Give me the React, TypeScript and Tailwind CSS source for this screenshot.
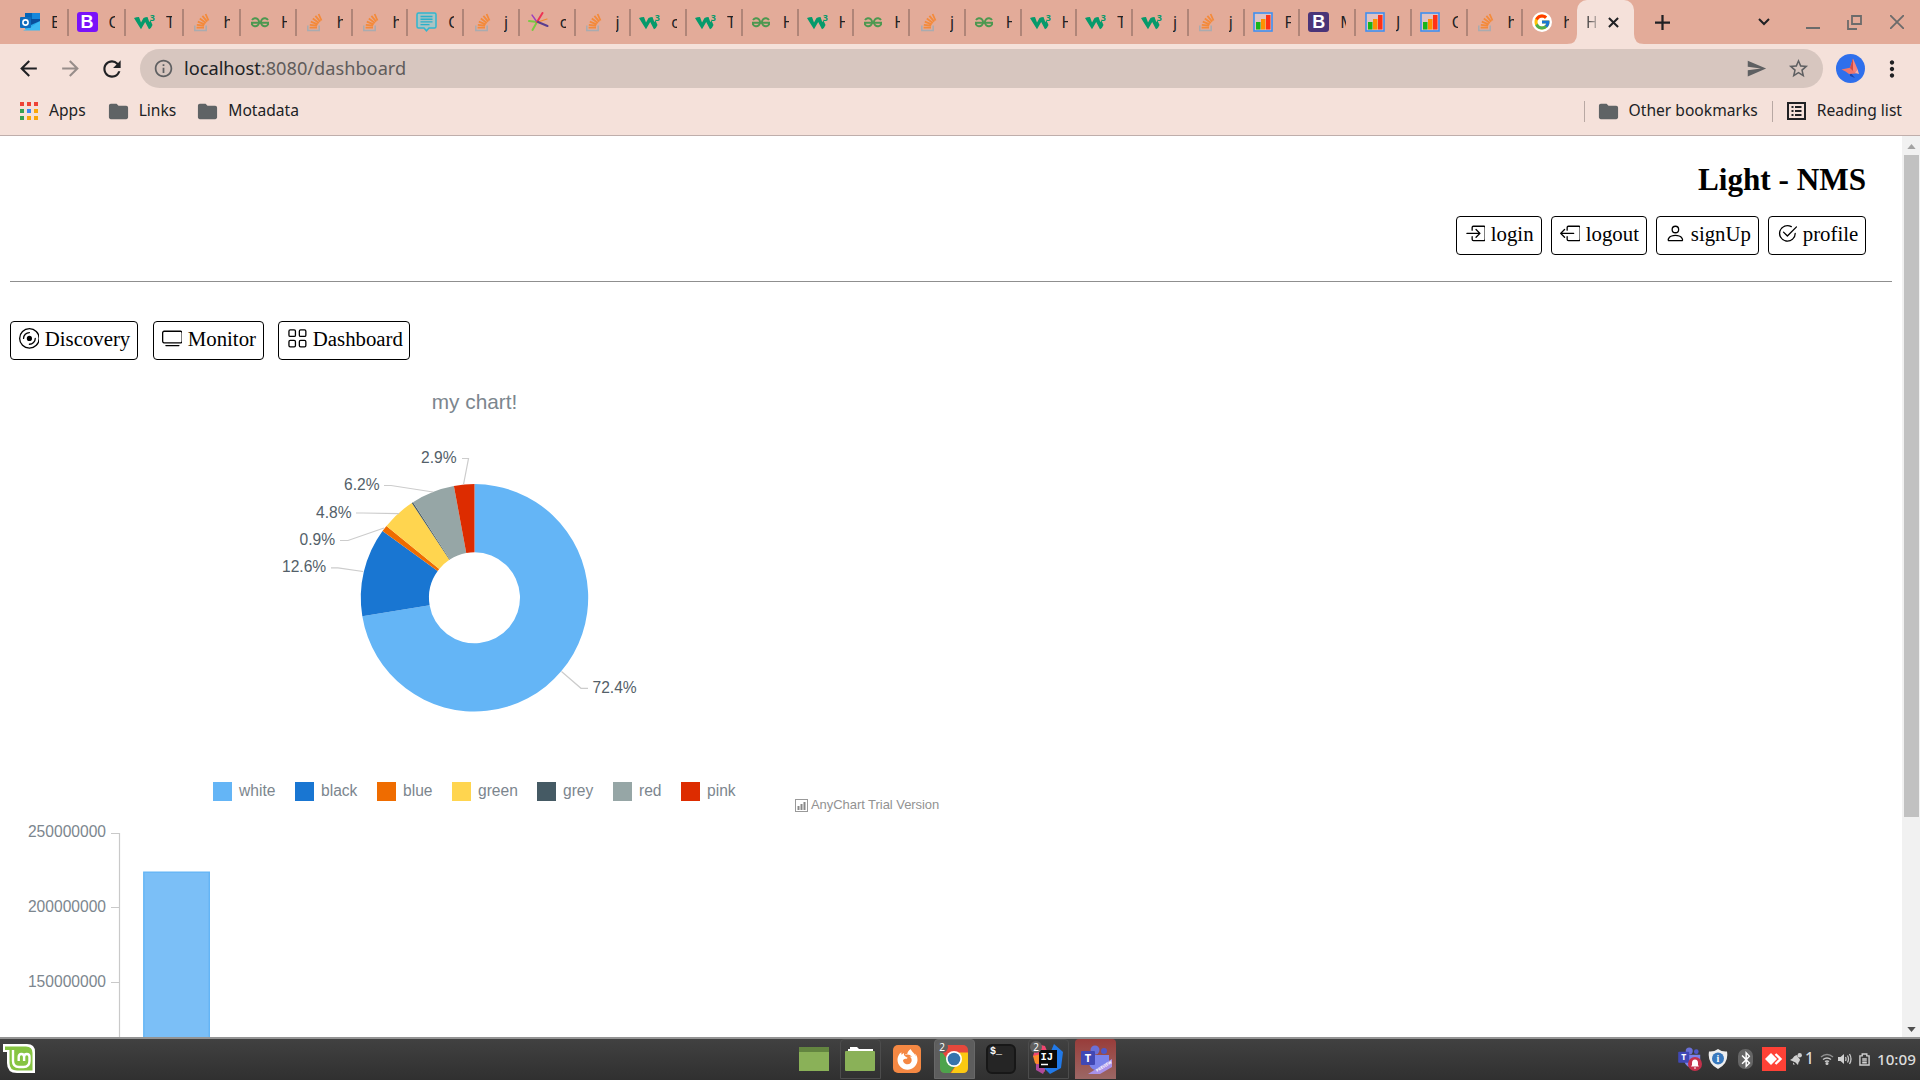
import React from "react";
import { BsBoxArrowInRight, BsBoxArrowLeft, BsPerson, BsCheck2Circle, BsDisc, BsTv, BsGrid } from "react-icons/bs";
import { MdArrowBack, MdArrowForward, MdRefresh, MdInfoOutline, MdSend, MdStarBorder, MdMoreVert, MdFolder } from "react-icons/md";
import { FaFirefoxBrowser, FaBluetoothB } from "react-icons/fa";
import { FcGoogle } from "react-icons/fc";

function Outlook() {
  return (
    <svg viewBox="0 0 20 20" className="h-5 w-5">
      <rect x="5" y="1" width="15" height="16" fill="#28a8ea" />
      <rect x="5" y="1" width="7.5" height="8" fill="#0364b8" />
      <rect x="12.5" y="1" width="7.5" height="8" fill="#1687dc" />
      <path d="M3 18.5h17V9l-9 6z" fill="#3cb9f2" />
      <path d="M11 13l9-4V7h-9z" fill="#0a4f9c" />
      <rect x="0" y="5" width="11" height="11" rx="1" fill="#0f6cbd" />
      <circle cx="5.5" cy="10.5" r="2.6" fill="none" stroke="#fff" strokeWidth="1.6" />
    </svg>
  );
}
function Bootstrap({ dark = false }: { dark?: boolean }) {
  return (
    <span className={(dark ? "bg-[#4a3478]" : "bg-[#7a12f9]") + " flex h-5 w-[21px] items-center justify-center rounded-[3px] font-['Liberation_Sans'] text-[18px] leading-none font-bold text-white"}>B</span>
  );
}
function W3() {
  return (
    <svg viewBox="0 0 21 20" className="h-5 w-[21px]">
      <path d="M0 6q2.500-1 5-1l2 5.500L9.500 6q2-1 4-1l1.800 5 1.200-1.500L18.500 13q-1 3-3.500 4.300L11.200 10 7 17.300Q3 11 0 6z" fill="#059a6b" />
      <text x="15.8" y="8.5" fontSize="9" fontWeight="bold" fontFamily="Noto Sans" fill="#059a6b">3</text>
    </svg>
  );
}
function StackO() {
  return (
    <svg viewBox="0 0 20 20" className="h-5 w-5" fill="none">
      <path d="M2.800 13.500v5h11.400v-5" stroke="#a9abb0" strokeWidth="1.5" />
      <path d="M4.600 15.600h7.400M4.800 12.800l7.300.9M5.800 9.700l7 2.600M7.800 6.600l6.100 4.300M10.400 3.900l4.800 5.700M13.600 2l2.900 6.500" stroke="#f48a3a" strokeWidth="1.8" />
    </svg>
  );
}
function Gfg() {
  return (
    <svg viewBox="0 0 20 20" className="h-5 w-5" fill="none" stroke="#4c9850" strokeWidth="1.9">
      <path d="M2 8A3.900 4 0 1 1 2 12.500" />
      <path d="M18 8A3.900 4 0 1 0 18 12.500" />
      <path d="M1 10.700h18M2 10.500v2.500M18 10.500v2.500" />
    </svg>
  );
}
function Chat() {
  return (
    <svg viewBox="0 0 21 20" className="h-5 w-[21px]">
      <path d="M2.500 1h16q1.500 0 1.500 1.500v12q0 1.500-1.500 1.500H13l-2.500 2.800L8 16H2.500q-1.500 0-1.500-1.500v-12Q1 1 2.500 1z" fill="#a9c3c3" stroke="#2fb7cf" strokeWidth="1.5" />
      <path d="M4.500 4.500h12M4.500 7.200h12M4.500 9.900h12M4.500 12.600h9" stroke="#2bb0ca" strokeWidth="1.4" />
    </svg>
  );
}
function Burst() {
  return (
    <svg viewBox="0 0 21 20" className="h-5 w-[21px]" strokeWidth="2" strokeLinecap="round" fill="none">
      <path d="M9 10 1 9" stroke="#7ac943" />
      <path d="M9 10 4 3" stroke="#9a3ec0" strokeWidth="1.3" />
      <path d="M9 10 4.500 18" stroke="#7ac943" />
      <path d="M9 10 14.500 1" stroke="#ee3355" />
      <path d="M10 10 19 7" stroke="#f08a2c" strokeWidth="1.2" />
      <path d="M10 10 19.500 14" stroke="#5a3d8f" />
    </svg>
  );
}
function ChartFav() {
  return (
    <svg viewBox="0 0 20 20" className="h-5 w-5">
      <rect x="1" y="1" width="18" height="18" fill="#dfc3c4" stroke="#3f8ff0" strokeWidth="1.6" />
      <rect x="3" y="10" width="4.5" height="7.5" fill="#19b519" />
      <rect x="8" y="7" width="4.5" height="10.5" fill="#ff9000" />
      <rect x="13" y="3" width="4.5" height="14.5" fill="#ff3116" />
    </svg>
  );
}
function GoogleFav() {
  return <span className="flex h-5 w-5 items-center justify-center rounded-full bg-white"><FcGoogle className="h-[18px] w-[18px]" /></span>;
}

const tabs: [React.ComponentType<any>, string][] = [
  [Outlook, "E"], [Bootstrap, "C"], [W3, "T"], [StackO, "h"], [Gfg, "H"], [StackO, "h"], [StackO, "h"], [Chat, "C"],
  [StackO, "j"], [Burst, "c"], [StackO, "j"], [W3, "c"], [W3, "T"], [Gfg, "H"], [W3, "H"], [Gfg, "H"], [StackO, "j"],
  [Gfg, "H"], [W3, "H"], [W3, "T"], [W3, "j"], [StackO, "j"], [ChartFav, "F"], [Bootstrap, "M"], [ChartFav, "J"],
  [ChartFav, "C"], [StackO, "h"], [GoogleFav, "h"],
];

function TabStrip() {
  return (
    <div className="flex h-[44px] shrink-0 bg-[#e3ab99] pl-[9px] text-[#202124]">
      {tabs.map(([Icon, t], i) => (
        <div key={i} className={(i < 4 ? "w-[57.5px]" : "w-[55.75px]") + " flex h-full shrink-0 items-center"}>
          <span className={(i ? "bg-[#b08578]" : "") + " h-[27px] w-[2px] shrink-0"} />
          <span className="ml-[8px] flex w-[21px] shrink-0 justify-center"><Icon dark={i > 10} /></span>
          <span className="ml-[11px] w-[6px] shrink-0 overflow-hidden text-[15.6px] leading-5">{t}</span>
        </div>
      ))}
      <div className="relative flex h-full w-[57px] shrink-0 items-center rounded-t-[10px] bg-[#f5e1da]">
        <svg viewBox="0 0 10 10" className="absolute bottom-0 -left-[10px] h-[10px] w-[10px]"><path d="M10 0v10H0Q10 10 10 0" fill="#f5e1da" /></svg>
        <svg viewBox="0 0 10 10" className="absolute -right-[10px] bottom-0 h-[10px] w-[10px]"><path d="M0 0v10h10Q0 10 0 0" fill="#f5e1da" /></svg>
        <span className="ml-[9px] w-[10px] overflow-hidden bg-linear-to-r from-[#333] to-[#b5a8a4] bg-clip-text text-[15.6px] leading-5 text-transparent">H</span>
        <svg viewBox="0 0 12 12" className="ml-[12px] h-[11px] w-[11px]"><path d="M1 1l10 10M11 1 1 11" stroke="#202124" strokeWidth="2.2" /></svg>
      </div>
      <div className="flex flex-1 items-center">
        <svg viewBox="0 0 16 16" className="ml-[21px] h-[15px] w-[15px]"><path d="M8 0v16M0 8h16" stroke="#202124" strokeWidth="2.4" /></svg>
        <svg viewBox="0 0 12 8" className="ml-[88px] h-[8px] w-[12px]" fill="none"><path d="M1 1l5 5 5-5" stroke="#202124" strokeWidth="2" /></svg>
        <span className="mt-[12px] ml-[36px] h-[2px] w-[14px] bg-[#6b6b6b]" />
        <svg viewBox="0 0 15 15" className="ml-[27px] h-[15px] w-[15px]" fill="none" stroke="#6b6b6b" strokeWidth="1.8"><path d="M5 1h9v8H5zM1 5v9h9" /></svg>
        <svg viewBox="0 0 14 14" className="ml-[28px] h-[14px] w-[14px]"><path d="M0 0l14 14M14 0 0 14" stroke="#6b6b6b" strokeWidth="1.8" /></svg>
      </div>
    </div>
  );
}

function Toolbar() {
  return (
    <div className="flex h-[49px] shrink-0 items-center">
      <MdArrowBack className="ml-[16px] h-[25px] w-[25px] text-[#202124]" />
      <MdArrowForward className="ml-[17px] h-[25px] w-[25px] text-[#978d8a]" />
      <MdRefresh className="ml-[16px] h-[26px] w-[26px] text-[#202124]" />
      <div className="ml-[15px] flex h-[39px] w-[1683px] items-center rounded-full bg-[#d7c6bf]">
        <MdInfoOutline className="ml-[13px] h-[21px] w-[21px] text-[#5f6062]" />
        <span className="mb-[2px] ml-[10px] text-[18.2px] leading-6 text-[#202124]">localhost<span className="text-[#605c5b]">:8080/dashboard</span></span>
        <MdSend className="mr-[20px] ml-auto h-[21px] w-[21px] text-[#5f6062]" />
        <MdStarBorder className="mr-[13px] h-[23px] w-[23px] text-[#5f6062]" />
      </div>
      <svg viewBox="0 0 29 29" className="ml-[13px] h-[29px] w-[29px]">
        <circle cx="14.5" cy="14.5" r="14.5" fill="#2e6fec" />
        <path d="M14 18l5 6-5-2z" fill="#1c46b0" />
        <path d="M17 4.500 21.500 15 19 19 14 14z" fill="#fb8478" />
        <path d="M5.500 15.500 15 13.500l5 6-7 .5q-3-3-7.500-4.500z" fill="#f0766c" />
        <path d="M17 4.500 14 14l3 3z" fill="#cf4c48" />
        <path d="M21.500 15l1.500 5-4-1z" fill="#ffb0a0" />
      </svg>
      <MdMoreVert className="ml-[14px] h-[26px] w-[26px] text-[#202124]" />
    </div>
  );
}

const appDots = ["#ee4237", "#ee4237", "#ee4237", "#35a052", "#3a86f5", "#f9a60c", "#35a052", "#f9a60c", "#f9a60c"];
function Bookmarks() {
  return (
    <div className="flex h-[43px] shrink-0 items-center border-b border-[#bfaeab] pb-[6px] text-[15.6px] text-[#202124]">
      <div className="ml-[20px] grid grid-cols-3 gap-[3px]">
        {appDots.map((c, i) => <span key={i} className="h-[4px] w-[4px]" style={{ background: c }} />)}
      </div>
      <span className="ml-[11px]">Apps</span>
      <MdFolder className="ml-[21px] h-[23px] w-[23px] text-[#5f6365]" />
      <span className="ml-[9px]">Links</span>
      <MdFolder className="ml-[20px] h-[23px] w-[23px] text-[#5f6365]" />
      <span className="ml-[9px]">Motadata</span>
      <span className="mr-[12px] ml-auto h-[21px] w-px bg-[#b8a8a3]" />
      <MdFolder className="h-[23px] w-[23px] text-[#5f6365]" />
      <span className="ml-[9px]">Other bookmarks</span>
      <span className="mr-[14px] ml-[14px] h-[21px] w-px bg-[#b8a8a3]" />
      <svg viewBox="0 0 19 18" className="h-[18px] w-[19px]" fill="none" stroke="#202124" strokeWidth="2"><path d="M1 1h17v16H1zM4.500 5h2M8 5h6.500M4.500 9h2M8 9h6.500M4.500 13h2M8 13h6.500" /></svg>
      <span className="mr-[18px] ml-[11px]">Reading list</span>
    </div>
  );
}

function NavButton({ icon: Icon, label, className }: { icon: React.ComponentType<any>; label: string; className: string }) {
  return (
    <button className={className + " flex h-[39px] shrink-0 items-center rounded-[4px] border border-black pb-[2px] pl-[7.5px] text-[20.8px] leading-none whitespace-nowrap"}>
      <Icon className="mb-[2px] h-[20.8px] w-[20.8px] shrink-0" /><span className="ml-[5.5px]">{label}</span>
    </button>
  );
}

const slices = [
  { name: "white", v: 72.4, c: "#64b5f6", w: "w-[82px]" },
  { name: "black", v: 12.6, c: "#1976d2", w: "w-[82px]" },
  { name: "blue", v: 0.9, c: "#ef6c00", w: "w-[75px]" },
  { name: "green", v: 4.8, c: "#ffd54f", w: "w-[85px]" },
  { name: "grey", v: 0.2, c: "#455a64", w: "w-[76px]" },
  { name: "red", v: 6.2, c: "#96a6a6", w: "w-[68px]" },
  { name: "pink", v: 2.9, c: "#dd2c00", w: "w-[80px]" },
];
const CX = 474.5, CY = 227.8, R = 113.7, r = 45.5;
function arc(a: number, b: number) {
  const p = (rad: number, t: number) => `${CX + rad * Math.sin(t)} ${CY - rad * Math.cos(t)}`;
  const big = b - a > Math.PI ? 1 : 0;
  return `M${p(R, a)}A${R} ${R} 0 ${big} 1 ${p(R, b)}L${p(r, b)}A${r} ${r} 0 ${big} 0 ${p(r, a)}Z`;
}
const callouts = [
  { t: "2.9%", x: 421, y: 93, d: "M463.500 114.500L468.500 88.500H462" },
  { t: "6.2%", x: 344, y: 120, d: "M433 122L391 115.500H384" },
  { t: "4.8%", x: 316, y: 148, d: "M399 143.700L363 143H356" },
  { t: "0.9%", x: 299.5, y: 175, d: "M384 158L348 170.500H340" },
  { t: "12.6%", x: 282, y: 202, d: "M363 201.500L338 197.800H331" },
  { t: "72.4%", x: 592.5, y: 323, d: "M561.500 301.500L581 318.300H588" },
];

function Donut() {
  let acc = 0;
  return (
    <svg width="960" height="410" viewBox="0 0 960 410" className="block" fontFamily="Liberation Sans">
      <text x="474.5" y="39" textAnchor="middle" fontSize="20.8" fill="#7c868e">my chart!</text>
      {slices.map((s) => {
        const a = (acc / 100) * 2 * Math.PI;
        acc += s.v;
        return <path key={s.name} d={arc(a, (acc / 100) * 2 * Math.PI)} fill={s.c} />;
      })}
      {callouts.map((c) => (
        <g key={c.t}>
          <path d={c.d} fill="none" stroke="#ccc" strokeWidth="1.2" />
          <text x={c.x} y={c.y} fontSize="15.6" fill="#545f69">{c.t}</text>
        </g>
      ))}
    </svg>
  );
}

function BarChart() {
  return (
    <svg width="960" height="218" viewBox="0 820 960 218" className="block" fontFamily="Liberation Sans" fontSize="15.6" fill="#7c868e">
      <path d="M119.500 833v205M111 833.500h9M111 907.500h9M111 982.500h9" stroke="#c9c9c9" strokeWidth="1.2" />
      <text x="106" y="837" textAnchor="end">250000000</text>
      <text x="106" y="912" textAnchor="end">200000000</text>
      <text x="106" y="987" textAnchor="end">150000000</text>
      <rect x="143.8" y="872.2" width="65.5" height="190" fill="#7bbff7" stroke="#64b5f6" strokeWidth="1.4" />
    </svg>
  );
}

function TeamsIcon({ className }: { className: string }) {
  return (
    <svg viewBox="0 0 30 28" className={className}>
      <circle cx="14" cy="5" r="4.5" fill="#6a70d8" /><circle cx="23" cy="6" r="3" fill="#4f58c8" />
      <path d="M8 10h20v9q0 7-9 7-9 0-11-7z" fill="#7b83eb" />
      <rect x="0" y="6" width="14" height="14" rx="1" fill="#4048b5" />
      <text x="7" y="17" fontSize="11" fontWeight="bold" textAnchor="middle" fill="#fff" fontFamily="Noto Sans">T</text>
    </svg>
  );
}

function Badge() {
  return <span className="absolute top-[1px] left-[1px] flex h-[12px] w-[12px] items-center justify-center rounded-full bg-[#606060] text-[10px] leading-none text-white">2</span>;
}

function Taskbar() {
  return (
    <div className="relative z-10 flex h-[43px] shrink-0 items-center border-t-2 border-[#939393] bg-linear-to-b from-[#414141] to-[#303030] pb-[1px] text-[#dcdcdc]">
      <svg viewBox="0 0 32 30" className="ml-[3px] h-[30px] w-[32px]">
        <path d="M0 0h24q8 0 8 8v21H14Q4 29 4 19V8H0z" fill="#fff" />
        <path d="M2 2.500h21q6.500 0 6.500 6.500v17.500H14q-7.500 0-7.500-7.500V6H2z" fill="#86c442" />
        <path d="M10 6v11q0 6 6 6h4.500q6 0 6-6v-4q0-3-2.700-3t-2.700 3v4-4q0-3-2.700-3t-2.700 3v4" fill="none" stroke="#fff" strokeWidth="2.4" />
      </svg>
      <div className="ml-[764px] flex h-full items-center">
        <span className="h-[24px] w-[30px] border-t-[5px] border-[#638540] bg-[#8ab158]" />
        <span className="ml-[11px] flex h-full w-[41px] items-center justify-center rounded-t border border-[#4c4c4c]">
          <svg viewBox="0 0 30 24" className="mr-[1px] h-[24px] w-[30px]"><path d="M5 0h7l2 2h14v6H3V2h2z" fill="#fff" /><rect y="4" width="30" height="20" rx="1" fill="#8ab158" /></svg>
        </span>
        <span className="ml-[12px] flex h-[28px] w-[28px] items-center justify-center rounded-[5px] bg-[#f58843]"><FaFirefoxBrowser className="h-[21px] w-[21px] text-white" /></span>
        <span className="relative ml-[13px] flex h-full w-[41px] items-center justify-center rounded-t border border-[#686868] bg-[#5d5d5d]">
          <svg viewBox="0 0 28 28" className="mr-[1px] h-[28px] w-[28px]">
            <rect width="28" height="28" rx="5" fill="#e6483c" /><path d="M0 4l9 13 7 3-6 8H5q-5 0-5-5z" fill="#4da34c" /><path d="M14 7.500h14V23q0 5-5 5H11l8-12z" fill="#fbc912" />
            <circle cx="14" cy="14" r="8" fill="#fff" /><circle cx="14" cy="14" r="6.3" fill="#3674ad" />
          </svg>
          <Badge />
        </span>
        <span className="ml-[11px] h-[30px] w-[30px] rounded-[6px] border-2 border-[#171717] bg-[#252525] pl-[2px] font-['Liberation_Mono'] text-[10px] leading-[12px] font-bold text-white">$_</span>
        <span className="relative ml-[12px] flex h-full w-[41px] items-center justify-center rounded-t border border-[#4c4c4c]">
          <svg viewBox="0 0 30 30" className="mr-[1px] h-[30px] w-[30px]">
            <path d="M4 0l8 2 4 10-8 8-8-8z" fill="#f2466f" /><path d="M0 12l8-2 4 18-10-9z" fill="#fa8b2c" /><path d="M3 20h12l-5 10-7-4z" fill="#b04a9c" /><path d="M21 0l9 8-2 16-11 6-6-6z" fill="#2179e8" />
            <rect x="6" y="6" width="18" height="18" fill="#090909" /><text x="7.5" y="15.5" fontFamily="Liberation Mono" fontWeight="bold" fontSize="10.5" fill="#fff">IJ</text><path d="M8 20.500h7" stroke="#fff" strokeWidth="1.5" />
          </svg>
          <Badge />
        </span>
        <span className="relative ml-[6px] flex h-full w-[41px] items-center justify-center rounded-t bg-linear-to-b from-[#983c3a] to-[#9b6765]">
          <TeamsIcon className="h-[28px] w-[30px]" />
          <svg viewBox="0 0 24 16" className="absolute right-[4px] bottom-[4px] h-[16px] w-[24px]"><path d="M0 15L24 0v8L12 15z" fill="#a992e8" /><text x="9" y="13" transform="rotate(-31 9 13)" fontSize="4" fontWeight="bold" fontFamily="Noto Sans" fill="#fff">PREVIEW</text></svg>
        </span>
      </div>
      <div className="mr-[3px] ml-auto flex h-full items-center">
        <span className="relative flex h-[24px] w-[24px] items-start">
          <TeamsIcon className="h-[22px] w-[24px]" />
          <svg viewBox="0 0 14 14" className="absolute right-0 bottom-0 h-[14px] w-[14px]"><circle cx="7" cy="7" r="7" fill="#c4314b" /><path d="M7 2.500q3 0 3 3.500v2l1 1.500H3L4 8V6q0-3.500 3-3.500M6 10.500h2v1H6z" fill="#fff" /></svg>
        </span>
        <svg viewBox="0 0 20 20" className="ml-[6px] h-[20px] w-[20px]"><path d="M10 0q4 3 9 2.500 2 12-9 17.500-11-5.500-9-17.500Q6 3 10 0" fill="#eee" /><circle cx="10" cy="9.5" r="6" fill="#3978bd" /><text x="10" y="13" fontSize="10" textAnchor="middle" fill="#fff" fontFamily="Liberation Serif" fontWeight="bold">i</text></svg>
        <span className="ml-[10px] flex h-[20px] w-[15px] items-center justify-center rounded-[7px] bg-[#666]"><FaBluetoothB className="h-[17px] w-[14px] text-white" /></span>
        <svg viewBox="0 0 24 24" className="ml-[9px] h-[24px] w-[24px]"><rect width="24" height="24" fill="#ff4136" /><path d="M9 6l6 6-6 6-6-6z" fill="#fff" /><path d="M13.500 7l5 5-5 5" fill="none" stroke="#fff" strokeWidth="2.4" /></svg>
        <svg viewBox="0 0 12 12" className="ml-[4px] h-[12px] w-[12px]" fill="#d0d0d0"><path d="M0 7l2.500-1.500Q4 2.500 6.500 2L10 6.500q0 1.500-1.500 3L8 12 5.500 9.500z" /><path d="M3 9.500l2 2H3z" /><circle cx="9.7" cy="2.3" r="2.2" /></svg>
        <span className="ml-[3px] w-[10px] text-[15.5px] font-medium">1</span>
        <svg viewBox="0 0 14 12" className="ml-[5px] h-[12px] w-[14px]" fill="none" stroke="#c8c8c8" strokeWidth="1.5"><path d="M1 4q6-5 12 0" stroke="#909090" /><path d="M3 6.500q4-3 8 0M5 8.700q2-1.500 4 0" /><circle cx="7" cy="10.5" r=".8" /></svg>
        <svg viewBox="0 0 14 12" className="ml-[4px] h-[12px] w-[14px]" fill="none" stroke="#c8c8c8" strokeWidth="1.3"><path d="M0 4h2.500L6 1v10L2.500 8H0z" fill="#d0d0d0" stroke="none" /><path d="M7.500 4q1 2 0 4M9.500 2.500q2 3.500 0 7M11.500 1q3 5 0 10" /></svg>
        <svg viewBox="0 0 12 14" className="ml-[7px] h-[13px] w-[11px]" fill="none" stroke="#d0d0d0" strokeWidth="1.5"><path d="M1 3h2.500V1h5v2H11v10H1zM3.500 6.500h5M3.500 8.500h5M3.500 10.500h5" /></svg>
        <span className="ml-[7px] w-[40px] text-[15.2px] font-medium whitespace-nowrap">10:09</span>
      </div>
    </div>
  );
}

export default function App() {
  return (
    <div className="flex h-[1080px] w-[1920px] flex-col overflow-hidden bg-[#f5e1da] font-['Noto_Sans',sans-serif]">
      <TabStrip />
      <Toolbar />
      <Bookmarks />
      <div className="flex h-[901px] shrink-0 bg-white">
        <div className="flex-1 overflow-hidden font-['Liberation_Serif',serif] text-black">
          <h2 className="mt-[25px] mr-[36px] text-right text-[31.2px] leading-[38px] font-bold">Light - NMS</h2>
          <div className="mt-[17px] mr-[36px] flex justify-end gap-[9px]">
            <NavButton icon={BsBoxArrowInRight} label="login" className="w-[86px]" />
            <NavButton icon={BsBoxArrowLeft} label="logout" className="w-[96px]" />
            <NavButton icon={BsPerson} label="signUp" className="w-[103px]" />
            <NavButton icon={BsCheck2Circle} label="profile" className="w-[98px]" />
          </div>
          <div className="mt-[26px] mr-[10px] ml-[10px] h-px bg-[#8f8f8f]" />
          <div className="mt-[39px] ml-[10px] flex">
            <NavButton icon={BsDisc} label="Discovery" className="w-[128px]" />
            <NavButton icon={BsTv} label="Monitor" className="ml-[15px] w-[111px]" />
            <NavButton icon={BsGrid} label="Dashboard" className="ml-[14px] w-[132px]" />
          </div>
          <div className="mt-[10px] font-['Liberation_Sans',sans-serif]">
            <Donut />
            <div className="flex h-[40px] w-[960px] pl-[213px] text-[15.6px] text-[#7c868e]">
              {slices.map((s) => (
                <div key={s.name} className={s.w + " flex h-[22px] shrink-0 items-center"}>
                  <span className="mt-[1px] mr-[7px] h-[19px] w-[19px] shrink-0" style={{ background: s.c }} />{s.name}
                </div>
              ))}
              <div className="mt-[18px] ml-[34px] flex h-[14px] items-center text-[13px] tracking-[-0.05px] whitespace-nowrap text-[#929292]">
                <svg viewBox="0 0 13 13" className="mr-[3px] h-[13px] w-[13px]"><rect x=".5" y=".5" width="12" height="12" fill="none" stroke="#999" /><path d="M3.500 11V7M6.500 11V5M9.500 11V3" stroke="#888" strokeWidth="2" /></svg>
                AnyChart Trial Version
              </div>
            </div>
            <BarChart />
          </div>
        </div>
        <div className="flex w-[18px] flex-col items-center bg-[#f1f1f1]">
          <svg viewBox="0 0 10 6" className="mt-[8px] h-[5px] w-[9px]"><path d="M0 6L5 0l5 6z" fill="#a3a3a3" /></svg>
          <div className="mt-[6px] h-[662px] w-[15px] bg-[#c1c1c1]" />
          <svg viewBox="0 0 10 6" className="mt-auto mb-[5px] h-[5px] w-[9px]"><path d="M0 0h10L5 6z" fill="#505050" /></svg>
        </div>
      </div>
      <Taskbar />
    </div>
  );
}
